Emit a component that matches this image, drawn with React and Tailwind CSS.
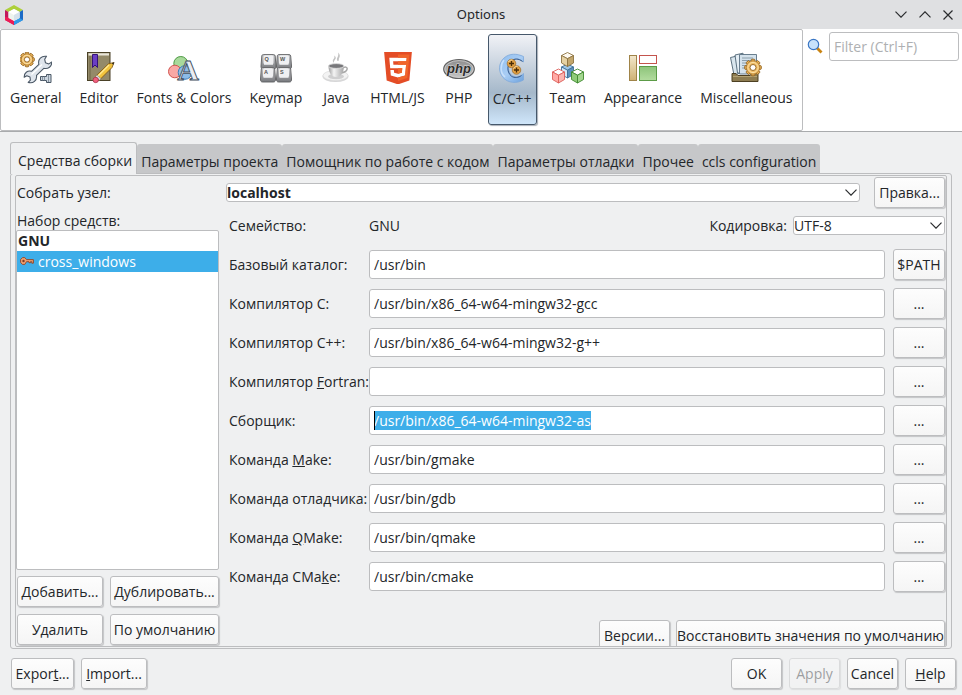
import { useEffect, useRef } from 'react';
import { FaHtml5 } from 'react-icons/fa';

const BUTTON =
  'flex h-[31px] items-center justify-center whitespace-nowrap rounded-[3px] border border-[#bcbdbf] bg-linear-to-b from-[#fdfdfd] to-[#f5f5f5] shadow-[1px_1px_1px_#c4c5c7]';
const FIELD = 'rounded-[3px] border border-[#bcbdbf] bg-white';

function Button({ className = '', children, ...rest }) {
  return (
    <button type="button" className={`${BUTTON} ${className}`} {...rest}>
      <span>{children}</span>
    </button>
  );
}

function Logo() {
  return (
    <svg viewBox="0 0 18 20" className="h-5 w-[18px]" aria-hidden="true">
      <path d="M9 0 18 5 14.5 7 9 4 3.5 7 0 5z" fill="#aed03a" />
      <path d="M0 5 3.5 7v6L9 16v4L0 15z" fill="#c2185b" />
      <path d="M0 12 3.5 12.5 9 16v4L0 15z" fill="#ee1c55" />
      <path d="M18 5v10l-9 5v-4l5.500-3V7z" fill="#1b6ac6" />
      <path d="M14.500 13 18 15 9 20v-4z" fill="#2f9bea" />
      <path d="M9 4l5.500 3v6L9 16l-5.500-3V7z" fill="#eef4ee" />
      <path d="M9 4l5.500 3L9 10 3.500 7z" fill="#fff" />
      <path d="M9 10l5.500-3v6L9 16z" fill="#d5e2ec" />
    </svg>
  );
}

function Gear({ cx, cy, r }) {
  const teeth = [0, 45, 90, 135, 180, 225, 270, 315];
  return (
    <g transform={`translate(${cx} ${cy})`}>
      {teeth.map((a) => (
        <rect key={a} x="-1.900" y={-r} width="3.800" height="4" rx="1" fill="#eeb85c" stroke="#8f5f1c" strokeWidth=".9" transform={`rotate(${a})`} />
      ))}
      <circle r={r - 1.6} fill="#f0bd66" stroke="#a06f28" strokeWidth=".7" />
      <circle r={r - 3.2} fill="none" stroke="#fbe0a6" strokeWidth="1" />
      <circle r={r * 0.36} fill="#fff" stroke="#8f5f1c" strokeWidth=".9" />
    </g>
  );
}

function GeneralIcon() {
  return (
    <>
      <Gear cx={7} cy={7.500} r={7.300} />
      <path
        d="M26.500 4.300c-5-.8-9 3-7.600 8l-7.400 7c-4-1-7.500 1.500-7.300 6l2.600-1.600 3.200 1.300.4 3.200-2.200 2.200c5 1.500 9-2 8.300-7l7.300-7.100c4.500 1 8-1.800 8-6.300l-3 1.900-3.300-1.100-.8-3.500z"
        fill="#dfe5ec"
        stroke="#4b5866"
        strokeWidth="1.100"
        strokeLinejoin="round"
      />
      <path d="M11.500 22.500 22 12.500" stroke="#fff" strokeWidth="1.200" />
      <path d="M20.500 24.500h6v-2h4.500v8h-4.500v-2h-6z" fill="#cbd5df" stroke="#4b5866" />
      <path d="M22.500 24.500v4M24.500 24.500v4M28.500 23v7" stroke="#74818f" strokeWidth=".8" />
    </>
  );
}

function EditorIcon() {
  return (
    <>
      <rect x="4.500" y=".5" width="22.500" height="28" fill="#948a69" stroke="#4a4127" />
      <rect x="5.500" y="1.300" width="20.500" height="2.200" fill="#e9e6da" />
      <path d="M7 4v24" stroke="#6f6546" />
      <path d="M9.500 2.500h5v13l-2.500-2.500-2.500 2.500z" fill="#6a3fc4" stroke="#351378" />
      <path d="M31 10.500l-2 5-13 13-4-3.700 13.500-13z" fill="#f2c43d" stroke="#80591a" strokeWidth=".9" />
      <path d="M26 13 14 25" stroke="#ffe995" strokeWidth="1.300" />
      <path d="M31.300 10.200l-2.500 1 1.500 1.600z" fill="#222" />
      <path d="M14 23l4 3.700-1.500 1.500-4-3.700z" fill="#d8dbe0" stroke="#777" strokeWidth=".5" />
      <circle cx="12.700" cy="28" r="2.700" fill="#f0607d" stroke="#a32c45" strokeWidth=".7" />
    </>
  );
}

function FontsIcon() {
  return (
    <>
      <circle cx="12.800" cy="11.500" r="7" fill="#a8d99b" stroke="#4f9b45" />
      <circle cx="6.800" cy="19.500" r="6.300" fill="#f9a8a5" stroke="#d2544f" />
      <circle cx="17" cy="20.500" r="6.800" fill="#8dbce8" stroke="#3b7cb8" />
      <text x="20" y="27.500" textAnchor="middle" fontFamily="Liberation Serif" fontWeight="700" fontSize="30" fill="#e9edf3" stroke="#3f4d5d" strokeWidth=".9">A</text>
    </>
  );
}

function KeymapIcon() {
  const keys = [
    ['Q', 0.5, 2], ['W', 16, 2], ['A', 0, 15], ['S', 16, 15],
  ];
  return (
    <>
      <defs>
        <linearGradient id="key" x2="0" y2="1"><stop stopColor="#c9cacd" /><stop offset="1" stopColor="#77797d" /></linearGradient>
      </defs>
      {keys.map(([k, x, y]) => (
        <g key={k} transform={`translate(${x} ${y})`}>
          <path d="M3 .6h10c1 0 1.500.5 1.700 1.400L15.500 12c.1 1.800-.5 3-2 3h-11C1 15 .4 13.800.5 12L1.300 2C1.500 1 2 .6 3 .6z" fill="url(#key)" stroke="#5c5d60" strokeWidth=".9" />
          <rect x="3" y="1.200" width="10" height="9" rx="1.500" fill="#eff0f2" />
          <path d="M3.500 10.500h9" stroke="#d9dadc" />
          <text x="4" y="6.500" fontSize="5.500" fontWeight="700" fontFamily="Liberation Sans" fill="#555">{k}</text>
        </g>
      ))}
    </>
  );
}

function JavaIcon() {
  return (
    <>
      <defs>
        <linearGradient id="cup"><stop stopColor="#9d9d9e" /><stop offset=".35" stopColor="#f4f4f4" /><stop offset="1" stopColor="#a4a4a5" /></linearGradient>
      </defs>
      <ellipse cx="15.500" cy="24.500" rx="13" ry="5.500" fill="#d6d6d7" />
      <ellipse cx="15.500" cy="23.500" rx="12.500" ry="5" fill="#f3f3f3" stroke="#dcdcdc" strokeWidth=".7" />
      <ellipse cx="16" cy="24.500" rx="8" ry="2.800" fill="#cfcfd0" />
      <path d="M23.500 15.500c5-2 5.500 4-2 5.500" fill="none" stroke="#a8a8a8" strokeWidth="1.500" />
      <path d="M8.500 14c0 6.500 3 11 7.500 11s8-4.500 8-11z" fill="url(#cup)" />
      <ellipse cx="16.200" cy="14" rx="7.800" ry="2.400" fill="#77777a" stroke="#e2e2e2" strokeWidth=".9" />
      <path d="M14 11c-3.500-3.500 2-4 0-7.500 4.500 3-1 4.500 0 7.500zM17.500 9c-2-3 2-4.500.5-8.500 4 4 0 5 1 8z" fill="#c3c3c3" />
    </>
  );
}

function HtmlIcon() {
  return (
    <>
      <path d="M6 5h20v20l-10 4-10-4z" fill="#fff" />
      <FaHtml5 x="-2.500" y="-2.300" size={37} color="#e44d26" />
      <clipPath id="html-right">
        <path d="M16 2.500h11.500L25.300 26 16 29z" />
      </clipPath>
      <g clipPath="url(#html-right)">
        <FaHtml5 x="-2.500" y="-2.300" size={37} color="#f0652b" />
      </g>
    </>
  );
}

function PhpIcon() {
  return (
    <>
      <defs>
        <linearGradient id="php" x2="0" y2="1">
          <stop stopColor="#8b8b8b" />
          <stop offset="1" stopColor="#c7c7c7" />
        </linearGradient>
      </defs>
      <ellipse cx="16" cy="17" rx="15.300" ry="9.500" fill="url(#php)" stroke="#626262" strokeWidth="1.200" />
      <ellipse cx="16" cy="17" rx="14.200" ry="8.400" fill="none" stroke="#cfcfcf" strokeWidth=".8" />
      <text x="16" y="20.500" textAnchor="middle" fontSize="13" fontStyle="italic" fontWeight="700" fontFamily="Liberation Sans" fill="#2c2c2c" stroke="#dcdcdc" strokeWidth="1" paintOrder="stroke">php</text>
    </>
  );
}

function CppIcon() {
  return (
    <>
      <defs>
        <linearGradient id="cring" x2="1" y2="1">
          <stop stopColor="#8fbdee" />
          <stop offset=".5" stopColor="#a9cdf4" />
          <stop offset="1" stopColor="#6ea3de" />
        </linearGradient>
      </defs>
      <path d="M27.500 3.500V9c-4-3.500-8.500-4-12-1-4 4-4 11.500.5 14.500 3.500 2.500 8 1.500 11.500-2v6.500c-7 4-15.500 3-20.500-2.500-5-6-4.500-14.500 1-19.500 5.500-5 13-4.500 19.500-1.500z" fill="url(#cring)" stroke="#7da8da" strokeWidth=".8" />
      <path d="M26.500 8.500c-4-3.200-8-3.200-11.500-.3-4.500 4-4 11.500.5 15 3 2 7 1.500 10-.7" fill="none" stroke="#35588a" strokeWidth="1" />
      <path d="M8 7c-4 5-4 13 1 17" fill="none" stroke="#c8e0fa" strokeWidth="1.500" />
      {[[15.500, 10.500], [20.500, 17]].map(([x, y]) => (
        <g key={x} transform={`translate(${x} ${y})`}>
          <circle r="4.300" fill="#e0a044" stroke="#93601a" strokeWidth=".6" />
          <path d="M-2.500 0h5M0-2.500v5" stroke="#4a2d06" strokeWidth="1.300" />
          <path d="M-3-1.500C-2-3.500 0-3.800 1-3.500" fill="none" stroke="#ffe4a8" />
        </g>
      ))}
    </>
  );
}

function Cube({ x, y, top, left, right, edge }) {
  return (
    <g transform={`translate(${x} ${y})`} stroke={edge} strokeWidth=".9" strokeLinejoin="round">
      <path d="M0-7 6-4 0-.8-6-4z" fill={top} />
      <path d="M-6-4 0-.8V7l-6-3.500z" fill={left} />
      <path d="M6-4 0-.8V7l6-3.500z" fill={right} />
    </g>
  );
}

function TeamIcon() {
  return (
    <>
      <Cube x={15.500} y={19} top="#9cc5e6" left="#d6e8f6" right="#5b91bd" edge="#3f7199" />
      <Cube x={15.500} y={7.500} top="#fffaf0" left="#e6d2a3" right="#c2a66c" edge="#8d7442" />
      <Cube x={6.500} y={24} top="#fff" left="#ffaaa5" right="#fbb5b0" edge="#dc5f59" />
      <Cube x={25.500} y={24} top="#fff" left="#8fcb79" right="#a3d68f" edge="#3f8a30" />
    </>
  );
}

function AppearanceIcon() {
  return (
    <>
      <defs>
        <linearGradient id="gold" x2="0" y2="1"><stop stopColor="#f3e8cd" /><stop offset="1" stopColor="#cdb173" /></linearGradient>
        <linearGradient id="green" x2="0" y2="1"><stop stopColor="#8dc47a" /><stop offset="1" stopColor="#b3dc9f" /></linearGradient>
      </defs>
      <rect x="2.500" y="3.500" width="7" height="25" fill="url(#gold)" stroke="#a08449" />
      <rect x="12.500" y="3.500" width="17" height="8" fill="#fff" stroke="#c4544d" />
      <rect x="12.500" y="14.500" width="17" height="14" fill="url(#green)" stroke="#5c9b47" />
    </>
  );
}

function MiscIcon() {
  return (
    <>
      <path d="M.5 5.500 7 4l3.500 17-6.500 2z" fill="#d9e6ee" stroke="#4d6373" strokeWidth=".9" />
      <path d="M5 3l8-1.800L15 21H7.500z" fill="#e4eef5" stroke="#4d6373" strokeWidth=".9" />
      <path d="M9.500 2.500h17V22h-17z" fill="#d4e2ec" stroke="#5a7182" strokeWidth=".9" />
      <path d="M12 6h11M12 8.500h11M12 11h7M12 13.500h6M12 16h6" stroke="#8397a6" strokeWidth=".9" />
      <path d="M2 21.500h4l2 2h12l2-2h6v8H2z" fill="#8d7c51" stroke="#4d4022" />
      <path d="M3 24.500h24" stroke="#b3a273" />
      <Gear cx={23} cy={15.500} r={8.300} />
    </>
  );
}

const CATEGORIES = [
  ['General', GeneralIcon],
  ['Editor', EditorIcon],
  ['Fonts & Colors', FontsIcon],
  ['Keymap', KeymapIcon],
  ['Java', JavaIcon],
  ['HTML/JS', HtmlIcon],
  ['PHP', PhpIcon],
  ['C/C++', CppIcon],
  ['Team', TeamIcon],
  ['Appearance', AppearanceIcon],
  ['Miscellaneous', MiscIcon],
];

function Category({ label, Icon, selected }) {
  return (
    <button
      type="button"
      aria-pressed={selected}
      className={`flex h-[91px] flex-col items-center rounded-[3px] border px-1 ${
        selected
          ? 'border-[#46586b] bg-linear-to-b from-[#f1f2f6] via-[#a5b8ca] via-65% to-[#cfe6fa] pt-[18px] shadow-[1px_1px_1px_#a9b0b8]'
          : 'border-transparent pt-[17px]'
      }`}
    >
      <svg viewBox="0 0 32 32" className="size-8" aria-hidden="true">
        <Icon />
      </svg>
      <span className="mt-1 whitespace-nowrap">{label}</span>
    </button>
  );
}

function Chevron({ className = '' }) {
  return (
    <svg viewBox="0 0 12 7" className={`h-[7px] w-3 ${className}`} fill="none" stroke="#2a2c2e" strokeWidth="1.200" aria-hidden="true">
      <path d="M.5.7 6 6.200 11.500.7" />
    </svg>
  );
}

function Select({ id, options, className = '' }) {
  return (
    <span className={`relative flex h-[19px] ${className}`}>
      <select id={id} className={`${FIELD} w-full appearance-none pr-6 leading-4`}>
        {options.map((o) => (
          <option key={o}>{o}</option>
        ))}
      </select>
      <Chevron className="pointer-events-none absolute top-[6px] right-[3px]" />
    </span>
  );
}

const TABS = ['Средства сборки', 'Параметры проекта', 'Помощник по работе с кодом', 'Параметры отладки', 'Прочее', 'ccls configuration'];

const TOOLS = [
  { id: 'base', label: 'Базовый каталог:', value: '/usr/bin', button: '$PATH' },
  { id: 'c', label: 'Компилятор C:', value: '/usr/bin/x86_64-w64-mingw32-gcc' },
  { id: 'cpp', label: 'Компилятор C++:', value: '/usr/bin/x86_64-w64-mingw32-g++' },
  { id: 'fortran', label: <>Компилятор <u>F</u>ortran:</>, value: '' },
  { id: 'as', label: 'Сборщик:', value: '/usr/bin/x86_64-w64-mingw32-as', focused: true },
  { id: 'make', label: <>Команда <u>M</u>ake:</>, value: '/usr/bin/gmake' },
  { id: 'gdb', label: 'Команда отладчика:', value: '/usr/bin/gdb' },
  { id: 'qmake', label: <>Команда <u>Q</u>Make:</>, value: '/usr/bin/qmake' },
  { id: 'cmake', label: <>Команда CMa<u>k</u>e:</>, value: '/usr/bin/cmake' },
];

function ToolRow({ id, label, value, button = '...', focused }) {
  const input = useRef(null);
  useEffect(() => {
    if (focused) {
      input.current.focus();
      input.current.select();
    }
  }, [focused]);
  return (
    <div className="flex h-[31px] items-center">
      <label htmlFor={id} className="w-[140px] shrink-0 whitespace-nowrap">{label}</label>
      <span className="relative flex min-w-0 flex-1">
        <input
          id={id}
          ref={input}
          type="text"
          defaultValue={value}
          className={`${FIELD} h-[29px] w-full px-1 outline-none selection:bg-[#3daee9] selection:text-white`}
        />
        {focused && <span className="absolute top-[5px] left-[5px] h-[19px] w-px bg-black" />}
      </span>
      <Button className="ml-2 w-[52px] shrink-0">{button}</Button>
    </div>
  );
}

export default function App() {
  return (
    <div className="flex min-h-screen flex-col bg-[#eff0f1] font-['Open_Sans','Noto_Sans',sans-serif] text-[14px] leading-[19px] text-[#232629]">
      <header className="flex h-[29px] shrink-0 items-center bg-[#dfe0e2] px-[5px]">
        <div className="flex-1"><Logo /></div>
        <h1 className="font-['Noto_Sans',sans-serif] text-[13px]">Options</h1>
        <div className="flex flex-1 items-center justify-end gap-3">
          <button type="button" aria-label="Minimize"><Chevron /></button>
          <button type="button" aria-label="Maximize"><Chevron className="rotate-180" /></button>
          <button type="button" aria-label="Close" className="pr-1">
            <svg viewBox="0 0 10 10" className="size-[10px]" stroke="#2a2c2e" strokeWidth="1.200" aria-hidden="true">
              <path d="M.5.5l9 9M9.500.5l-9 9" />
            </svg>
          </button>
        </div>
      </header>

      <div className="flex shrink-0 justify-between border-b border-[#a9abad] bg-white">
        <nav className="flex h-[102px] gap-2 rounded-[2px] border border-[#bcbdbf] px-1 py-1">
          {CATEGORIES.map(([label, Icon]) => (
            <Category key={label} label={label} Icon={Icon} selected={label === 'C/C++'} />
          ))}
        </nav>
        <div className="flex items-start gap-[6px] pt-[3px] pr-[3px]">
          <svg viewBox="0 0 16 16" className="mt-[6px] size-4 shrink-0" aria-hidden="true">
            <path d="M10 10l4.500 4.500" stroke="#c98412" strokeWidth="2.800" />
            <circle cx="6.500" cy="6.500" r="5.200" fill="#c7e2fb" stroke="#3a76c4" strokeWidth="1.200" />
          </svg>
          <input
            type="search"
            aria-label="Filter"
            placeholder="Filter (Ctrl+F)"
            className={`${FIELD} h-[29px] w-[130px] px-1 outline-none placeholder:text-[#aeb0b2]`}
          />
        </div>
      </div>

      <main className="flex flex-1 flex-col px-[10px] pt-[10px]">
        <div role="tablist" className="flex items-end">
          {TABS.map((tab, i) =>
            i === 0 ? (
              <button key={tab} type="button" role="tab" aria-selected="true" className="relative z-10 -mb-px h-8 rounded-t-[3px] border border-b-0 border-[#bcbdbf] bg-[#eff0f1] pr-1 pl-[7px] pt-1 whitespace-nowrap">
                {tab}
              </button>
            ) : (
              <button key={tab} type="button" role="tab" aria-selected="false" className="h-[29px] rounded-t-[3px] bg-[#c6c7c9] px-1 pt-[5px] whitespace-nowrap">
                {tab}
              </button>
            ),
          )}
        </div>

        <div className="flex flex-1 rounded-[3px] border border-[#bcbdbf] p-1 pt-px pb-px">
          <section className="flex max-h-[472px] flex-1 flex-col overflow-hidden rounded-[2px] border border-[#bcbdbf]">
            <div className="flex shrink-0 items-start pt-px pr-px">
              <label htmlFor="host" className="w-[210px] shrink-0 pt-[6px] pl-px">Собрать узел:</label>
              <Select id="host" options={['localhost']} className="mt-[6px] flex-1 font-bold" />
              <Button className="ml-[14px] w-[71px]">Правка...</Button>
            </div>

            <div className="flex min-h-0 flex-1">
              <div className="flex w-[203px] shrink-0 flex-col">
                <h2 className="pt-[3px] pl-px">Набор средств:</h2>
                <ul role="listbox" aria-label="Набор средств" className="flex-1 rounded-[2px] border border-[#bcbdbf] bg-white">
                  <li role="option" aria-selected="false" className="h-5 px-px font-bold">GNU</li>
                  <li role="option" aria-selected="true" className="flex h-[21px] items-center gap-1 bg-[#3daee9] pl-[3px] text-white">
                    <svg viewBox="0 0 14 8" className="mb-[2px] h-2 w-[14px]" aria-hidden="true">
                      <path d="M2.500.6h2.300l1.700 2H13.400v3.600h-1.600V4.700h-1.300v1H9V4.700H6.500l-1.700 2.700H2.500L.6 5.500v-3z" fill="#f0a070" stroke="#8d4326" strokeWidth=".9" />
                      <circle cx="3.500" cy="4" r="1.200" fill="#7d3b24" />
                    </svg>
                    cross_windows
                  </li>
                </ul>
                <div className="grid shrink-0 grid-cols-[86px_109px] justify-end gap-[7px] pt-[6px] pb-px">
                  <Button>Добавить...</Button>
                  <Button>Дублировать...</Button>
                  <Button>Удалить</Button>
                  <Button>По умолчанию</Button>
                </div>
              </div>

              <div className="flex min-w-0 flex-1 flex-col gap-2 pr-px pl-[10px]">
                <div className="flex h-[33px] shrink-0 items-start">
                  <span className="w-[140px] pt-2">Семейство:</span>
                  <span className="flex-1 pt-2">GNU</span>
                  <label htmlFor="encoding" className="pt-2 pr-[6px]">Кодировка:</label>
                  <Select id="encoding" options={['UTF-8']} className="mt-2 w-[152px]" />
                </div>
                {TOOLS.map((tool) => (
                  <ToolRow key={tool.id} {...tool} />
                ))}
                <div className="mt-5 flex justify-end gap-[6px]">
                  <Button className="w-[71px]">Версии...</Button>
                  <Button className="w-[269px]">Восстановить значения по умолчанию</Button>
                </div>
              </div>
            </div>
          </section>
        </div>
      </main>

      <footer className="flex shrink-0 gap-[7px] px-[11px] pt-[9px] pr-[6px] pb-[6px]">
        <Button className="w-[63px]">Expor<u>t</u>...</Button>
        <Button className="mr-auto w-[66px]"><u>I</u>mport...</Button>
        <Button className="w-[51px]">OK</Button>
        <Button className="w-[51px] opacity-40" disabled>Apply</Button>
        <Button className="w-[51px]">Cancel</Button>
        <Button className="w-[51px]"><u>H</u>elp</Button>
      </footer>
    </div>
  );
}
